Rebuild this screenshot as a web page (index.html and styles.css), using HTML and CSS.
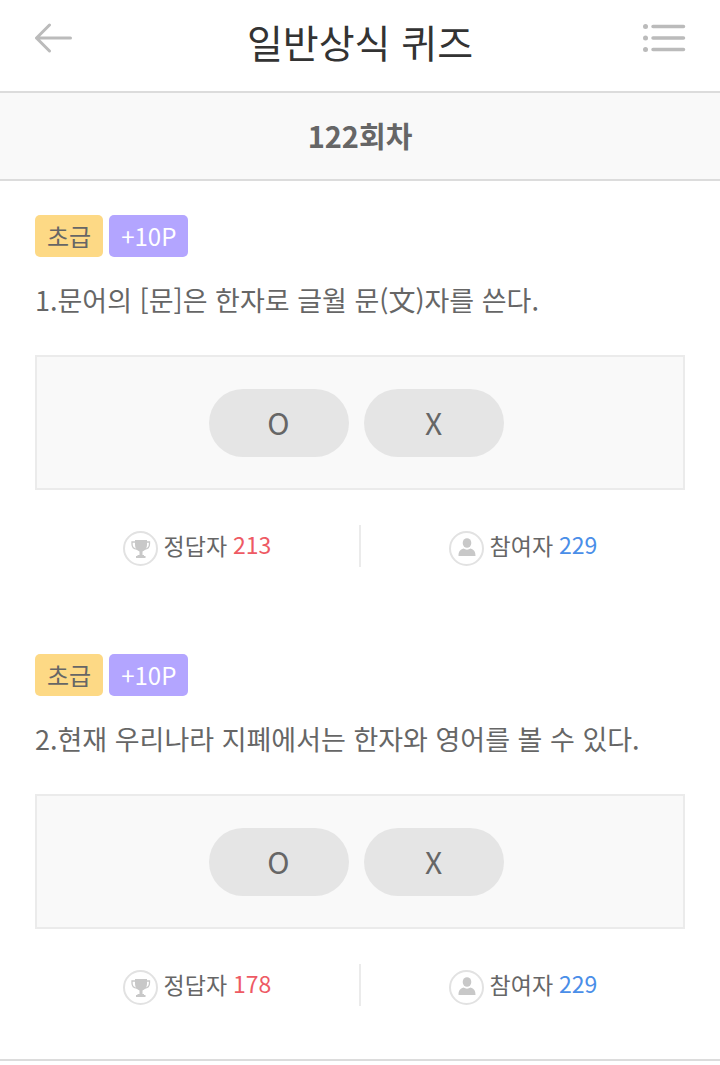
FILE: index.html
```html
<!DOCTYPE html>
<html lang="ko">
<head>
    <meta charset="UTF-8">
    <meta name="viewport" content="width=device-width, initial-scale=1.0">
    <title>일반상식 퀴즈</title>
    <link rel="stylesheet" href="styles.css">
</head>
<body>

    <!-- shared icons -->
    <svg class="sprite" aria-hidden="true">
        <symbol id="icon-trophy" viewBox="0 0 35 35">
            <circle cx="17.5" cy="17.5" r="16.5" fill="#fff" stroke="#e2e2e2" stroke-width="2"/>
            <path d="M12.500 11H9v2c0 3 2 5 5 5.200M23.500 11h3v2c0 3-2 5-5 5.200" fill="none" stroke="#c8c8c8" stroke-width="1.300"/>
            <path d="M12 9h12v5c0 3.500-2 5.500-4.500 6.500V24h1.500v1h1.500v2H13v-2h1.500v-1h2v-3.500c-2.500-1-4.500-3-4.500-6.500z" fill="#c8c8c8"/>
        </symbol>
        <symbol id="icon-user" viewBox="0 0 35 35">
            <circle cx="17.5" cy="17.5" r="16.5" fill="#fff" stroke="#e2e2e2" stroke-width="2"/>
            <ellipse cx="18" cy="12" rx="4.300" ry="4.800" fill="#c8c8c8"/>
            <path d="M9.500 25c0-4.500 1.500-6.500 5-7.500 2 1.500 5 1.500 7 0 3.500 1 5 3 5 7.500z" fill="#c8c8c8"/>
        </symbol>
    </svg>

    <header class="header">
        <button class="icon-button" type="button" aria-label="뒤로">
            <svg width="38" height="30" viewBox="0 0 38 30" fill="none" stroke="#bbb" stroke-width="3" stroke-linecap="round" stroke-linejoin="round">
                <path d="M15.500 2L2.500 15l13 13M2.500 15h34"/>
            </svg>
        </button>
        <h1>일반상식 퀴즈</h1>
        <button class="icon-button" type="button" aria-label="목록">
            <svg width="43" height="30" viewBox="0 0 43 30">
                <g fill="#bbb">
                    <circle cx="2.500" cy="3.500" r="2.500"/>
                    <circle cx="2.500" cy="15" r="2.500"/>
                    <circle cx="2.500" cy="26.500" r="2.500"/>
                </g>
                <path d="M10 3.500h30.500M10 15h30.500M10 26.500h30.500" stroke="#bbb" stroke-width="3.500" stroke-linecap="round"/>
            </svg>
        </button>
    </header>

    <h2 class="round">122회차</h2>

    <main class="quiz-list">
        <section class="quiz">
            <div class="tags">
                <span class="tag level">초급</span>
                <span class="tag point">+10P</span>
            </div>
            <p class="question">1.문어의 [문]은 한자로 글월 문(文)자를 쓴다.</p>
            <div class="answers">
                <button class="answer" type="button">O</button>
                <button class="answer" type="button">X</button>
            </div>
            <div class="stats">
                <div class="stat">
                    <svg class="stat-icon"><use href="#icon-trophy"/></svg>
                    <span>정답자</span>
                    <span class="count correct">213</span>
                </div>
                <div class="stat">
                    <svg class="stat-icon"><use href="#icon-user"/></svg>
                    <span>참여자</span>
                    <span class="count joined">229</span>
                </div>
            </div>
        </section>

        <section class="quiz">
            <div class="tags">
                <span class="tag level">초급</span>
                <span class="tag point">+10P</span>
            </div>
            <p class="question">2.현재 우리나라 지폐에서는 한자와 영어를 볼 수 있다.</p>
            <div class="answers">
                <button class="answer" type="button">O</button>
                <button class="answer" type="button">X</button>
            </div>
            <div class="stats">
                <div class="stat">
                    <svg class="stat-icon"><use href="#icon-trophy"/></svg>
                    <span>정답자</span>
                    <span class="count correct">178</span>
                </div>
                <div class="stat">
                    <svg class="stat-icon"><use href="#icon-user"/></svg>
                    <span>참여자</span>
                    <span class="count joined">229</span>
                </div>
            </div>
        </section>
    </main>

</body>
</html>
```

FILE: styles.css
```css
* {
    box-sizing: border-box;
}

body {
    margin: 0;
    background-color: #fff;
    color: #666;
    font-family: "Noto Sans CJK KR", sans-serif;
    font-size: 24px;
    line-height: 42px;
}

button {
    border: none;
    padding: 0;
    background: none;
    color: inherit;
    font-family: inherit;
    cursor: pointer;
}

.sprite {
    display: none;
}

.header {
    display: flex;
    justify-content: space-between;
    padding: 11px 34px 20px;
    border-bottom: 2px solid #dcdcdc;
}

.header h1 {
    margin: 0;
    color: #333;
    font-size: 39px;
    font-weight: 400;
    line-height: 60px;
}

.icon-button {
    display: flex;
    width: 43px;
    padding-top: 12px;
}

.round {
    margin: 0;
    padding: 21px 0 23px;
    background-color: #f9f9f9;
    border-bottom: 2px solid #dcdcdc;
    font-size: 29px;
    font-weight: 700;
    text-align: center;
}

.quiz-list {
    border-bottom: 2px solid #dcdcdc;
}

.quiz {
    padding: 34px 35px 53px;
}

.tags {
    display: flex;
    gap: 6px;
}

.tag {
    padding: 0 12px;
    border-radius: 5px;
    line-height: 41px;
    padding-bottom: 1px;
}

.level {
    background-color: #fdd985;
}

.point {
    background-color: #b3a5ff;
    color: #fff;
}

.question {
    margin: 22px 0 34px;
    font-size: 27px;
}

.answers {
    display: flex;
    justify-content: center;
    gap: 15px;
    padding: 32px 8px 31px 0;
    border: 2px solid #ebebeb;
    background-color: #f9f9f9;
}

.answer {
    width: 140px;
    height: 68px;
    padding-bottom: 2px;
    border-radius: 34px;
    background-color: #e5e5e5;
    font-size: 30px;
}

.stats {
    display: flex;
    margin-top: 35px;
    font-size: 23px;
    line-height: 40px;
}

.stat {
    display: flex;
    flex: 1;
    justify-content: center;
    gap: 6px;
    height: 42px;
}

.stat + .stat {
    border-left: 2px solid #ebebeb;
}

.stat-icon {
    width: 35px;
    height: 35px;
    margin-top: 6px;
}

.count {
    line-height: 38px;
}

.correct {
    color: #ee5a64;
}

.joined {
    color: #4a8ee8;
}
```
